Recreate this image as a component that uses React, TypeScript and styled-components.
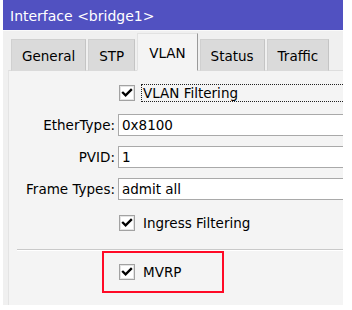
import React, { useState } from 'react';
import styled, { createGlobalStyle } from 'styled-components';

const GlobalStyle = createGlobalStyle`
    html, body {
        margin: 0;
        padding: 0;
        background: #ffffff;
    }
    body {
        font-family: "DejaVu Sans", Verdana, sans-serif;
        font-size: 13.5px;
        color: #000000;
    }
`

const Window = styled.div`
    width: 340px;
    height: 305px;
    margin-left: 3px;
    background: #f0f0f0;
    overflow: hidden;
    display: flex;
    flex-direction: column;
`
const TitleBar = styled.div`
    height: 30px;
    flex-shrink: 0;
    background: #5151c1;
    color: #ffffff;
    font-size: 14px;
    line-height: 33px;
    padding-left: 7px;
    white-space: nowrap;
`
const Body = styled.div`
    flex: 1;
    display: flex;
    flex-direction: column;
    padding: 3px 0 0 5px;
    border-top: 1px solid #fafafa;
`
const TabRow = styled.div`
    display: flex;
    align-items: flex-end;
    gap: 2px;
    height: 37px;
    padding-left: 3px;
    position: relative;
    z-index: 1;
    margin-bottom: -1px;
`
const Tab = styled.div<{ $active?: boolean }>`
    box-sizing: border-box;
    height: ${p => (p.$active ? '38px' : '32px')};
    padding: ${p => (p.$active ? '2px 11px 0' : '1px 10px 0')};
    display: flex;
    align-items: center;
    background: ${p => (p.$active ? '#f4f4f4' : '#dadada')};
    border: 1px solid ${p => (p.$active ? '#e2e2e2' : '#d0d0d0')};
    border-right-color: ${p => (p.$active ? '#9a9a9a' : '#c4c4c4')};
    border-bottom: ${p => (p.$active ? '1px solid #f4f4f4' : '1px solid #dadada')};
    white-space: nowrap;
    cursor: default;
`
const Panel = styled.div`
    flex: 1;
    width: 360px;
    background: #f4f4f4;
    border-top: 1px solid #dedede;
    border-left: 1px solid #e4e4e4;
    padding-top: 11px;
`
const Form = styled.div`
    display: grid;
    grid-template-columns: 106px 1fr;
    grid-template-rows: 22px 22px 22px 22px 26px;
    column-gap: 3px;
    row-gap: 10px;
`
const Label = styled.div`
    display: flex;
    align-items: center;
    justify-content: flex-end;
    white-space: nowrap;
`
const Field = styled.div`
    box-sizing: border-box;
    height: 22px;
    background: #ffffff;
    border: 1px solid #a9a9a9;
    padding-left: 3px;
    display: flex;
    align-items: center;
    white-space: nowrap;
`
const CheckCell = styled.div`
    grid-column: 2;
    display: flex;
    align-items: center;
    gap: 6px;
    padding-left: 1px;
`
const CheckText = styled.span<{ $focus?: boolean }>`
    flex: ${p => (p.$focus ? 1 : 'none')};
    height: 18px;
    box-sizing: border-box;
    display: flex;
    align-items: center;
    padding-left: 1px;
    border: 1px dotted ${p => (p.$focus ? '#222' : 'transparent')};
    white-space: nowrap;
`
const Separator = styled.div`
    margin: 13px 0 0 8px;
    height: 1px;
    background: #c9c9c9;
    border-bottom: 1px solid #ffffff;
`
const Highlight = styled.div`
    box-sizing: border-box;
    width: 122px;
    height: 42px;
    margin-left: 93px;
    border: 2px solid #ff0a26;
    display: flex;
    align-items: center;
    gap: 6px;
    padding-left: 15px;
`

const Checkbox = ({ checked, onToggle }: { checked: boolean; onToggle: () => void }) => (
    <svg width="16" height="16" viewBox="0 0 16 16" onClick={onToggle} style={{ flexShrink: 0 }}>
        <rect x="0.5" y="0.5" width="15" height="15" fill="#ffffff" stroke="#a2a2a2" />
        <rect x="1.5" y="1.5" width="13" height="13" fill="#ffffff" stroke="#e4e4e4" />
        {checked && (
            <path d="M4 7.8 L6.6 10.4 L12 5" fill="none" stroke="#000" strokeWidth="2.3" strokeLinecap="square" />
        )}
    </svg>
);

const tabs = ['General', 'STP', 'VLAN', 'Status', 'Traffic'];

const App = () => {
    const [ activeTab, setActiveTab ] = useState('VLAN');
    const [ vlanFiltering, setVlanFiltering ] = useState(true);
    const [ ingress, setIngress ] = useState(true);
    const [ mvrp, setMvrp ] = useState(true);

    return (
        <>
            <GlobalStyle />
            <Window>
                <TitleBar>Interface &lt;bridge1&gt;</TitleBar>
                <Body>
                    <TabRow>
                        {tabs.map(t => (
                            <Tab key={t} $active={t === activeTab} onClick={() => setActiveTab(t)}>{t}</Tab>
                        ))}
                    </TabRow>
                    <Panel>
                        <Form>
                            <CheckCell>
                                <Checkbox checked={vlanFiltering} onToggle={() => setVlanFiltering(!vlanFiltering)} />
                                <CheckText $focus>VLAN Filtering</CheckText>
                            </CheckCell>
                            <Label>EtherType:</Label>
                            <Field>0x8100</Field>
                            <Label>PVID:</Label>
                            <Field>1</Field>
                            <Label>Frame Types:</Label>
                            <Field>admit all</Field>
                            <CheckCell>
                                <Checkbox checked={ingress} onToggle={() => setIngress(!ingress)} />
                                <CheckText>Ingress Filtering</CheckText>
                            </CheckCell>
                        </Form>
                        <Separator />
                        <Highlight>
                            <Checkbox checked={mvrp} onToggle={() => setMvrp(!mvrp)} />
                            <CheckText>MVRP</CheckText>
                        </Highlight>
                    </Panel>
                </Body>
            </Window>
        </>
    );
};

export default App;
